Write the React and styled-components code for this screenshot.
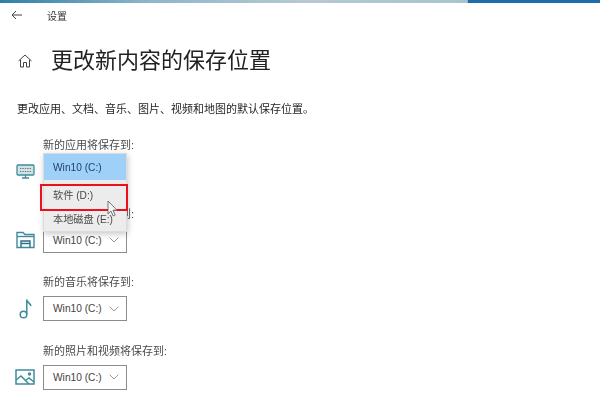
import React from "react";
import styled, { createGlobalStyle } from "styled-components";

const GlobalStyle = createGlobalStyle`
  html, body {
    margin: 0;
    padding: 0;
    background: #ffffff;
  }
  body {
    width: 600px;
    height: 400px;
    overflow: hidden;
    font-family: "Liberation Sans", "Noto Sans CJK SC", sans-serif;
    color: #1f1f1f;
  }
`;

const Page = styled.div`
  width: 600px;
  height: 400px;
  overflow: hidden;
  display: flex;
  flex-direction: column;
  filter: blur(0.4px);
`;

const TopStrip = styled.div`
  height: 3px;
  flex: none;
  background: linear-gradient(
    90deg,
    #2f7fa8 0,
    #8fb6c9 25%,
    #b5c9d2 50%,
    #a9c4d0 77.9%,
    #1b6ea6 78%,
    #1b6ea6 100%
  );
`;

const Header = styled.div`
  height: 24px;
  flex: none;
  display: flex;
  align-items: center;
  padding-left: 11px;
  gap: 24px;
  font-size: 10px;
  color: #333;
`;

const TitleRow = styled.div`
  display: flex;
  align-items: center;
  margin-top: 18px;
  padding-left: 17px;
  gap: 18px;
`;

const Title = styled.h1`
  margin: 0;
  font-size: 22px;
  line-height: 32px;
  font-weight: 400;
  color: #222;
`;

const Description = styled.p`
  margin: 25px 0 0 17px;
  font-size: 11px;
  line-height: 14px;
  color: #262626;
`;

const Sections = styled.div`
  position: relative;
  margin-top: 22px;
  display: flex;
  flex-direction: column;
  gap: 16.5px;
`;

const Section = styled.div`
  display: grid;
  grid-template-columns: 43px auto;
  grid-template-rows: 14px 25px;
  row-gap: 7px;
  height: 52px;
  align-items: center;
`;

const Label = styled.div`
  grid-column: 2;
  font-size: 11px;
  line-height: 14px;
  color: #4a4a4a;
`;

const IconCell = styled.div`
  grid-column: 1;
  grid-row: 2;
  display: flex;
  justify-content: center;
  width: 20px;
  margin-left: 15px;
  color: #3f8c9c;
`;

const Select = styled.div`
  grid-column: 2;
  grid-row: 2;
  box-sizing: border-box;
  width: 84px;
  height: 25px;
  border: 1px solid #8c8c8c;
  display: flex;
  align-items: center;
  justify-content: space-between;
  padding: 0 7px 0 9px;
  font-size: 10.2px;
  color: #444;
  background: #fff;
`;

const Menu = styled.div`
  position: absolute;
  left: 43px;
  top: 15px;
  width: 82px;
  background: #ececec;
  border: 1px solid #dcdcdc;
  box-shadow: 1px 2px 6px rgba(0, 0, 0, 0.22);
  z-index: 2;
`;

const MenuItem = styled.div`
  height: ${(p) => (p.$selected ? "26px" : "24.5px")};
  margin-bottom: ${(p) => (p.$selected ? "2px" : "0")};
  display: flex;
  align-items: center;
  padding-left: 9px;
  font-size: 10.2px;
  color: ${(p) => (p.$selected ? "#23436e" : "#4a4a4a")};
  background: ${(p) => (p.$selected ? "#9fd0f7" : "transparent")};
`;

const Highlight = styled.div`
  position: absolute;
  left: 40px;
  top: 46px;
  width: 88px;
  height: 27px;
  box-sizing: border-box;
  border: 2px solid #ee0f1c;
  z-index: 3;
`;

const Cursor = styled.svg`
  position: absolute;
  left: 107px;
  top: 62px;
  z-index: 4;
`;

const BackIcon = () => (
  <svg width="12" height="10" viewBox="0 0 12 10" fill="none" stroke="#444" strokeWidth="1">
    <path d="M11 5H1M5 1L1 5l4 4" />
  </svg>
);

const HomeIcon = () => (
  <svg width="16" height="16" viewBox="0 0 16 16" fill="none" stroke="#444" strokeWidth="1">
    <path d="M1.5 8L8 2l6.5 6M3.5 6.5V14H6.5V9.5H9.5V14H12.5V6.5" />
  </svg>
);

const Chevron = () => (
  <svg width="10" height="6" viewBox="0 0 10 6" fill="none" stroke="#999" strokeWidth="1">
    <path d="M.7.7l4.3 4.3L9.3.7" />
  </svg>
);

const MonitorIcon = () => (
  <svg width="19" height="15" viewBox="0 0 19 15" fill="none" stroke="currentColor" strokeWidth="1.3">
    <rect x="1" y="1" width="17" height="10" rx="1" fill="#cfe3e6" />
    <path d="M6 14h7M9.5 11v3" />
    <path d="M4 4.5h11M4 7.5h11" stroke="#777" strokeDasharray="1.4 1" strokeWidth="1" />
  </svg>
);

const FolderIcon = () => (
  <svg width="19" height="18" viewBox="0 0 19 18" fill="none" stroke="currentColor" strokeWidth="1.4">
    <path d="M1 16.5V1.5H7L9 3.5H18V16.5Z" />
    <path d="M1 5.5H18" />
    <path d="M5 16.5V10H14V16.5M5 12.5H14" stroke="#2f6f8a" />
  </svg>
);

const NoteIcon = () => (
  <svg width="13" height="21" viewBox="0 0 13 21" fill="none" stroke="currentColor" strokeWidth="1.5">
    <circle cx="4.5" cy="16.5" r="3.3" />
    <path d="M7.8 16.5V1.5c0 3 3.5 3.5 4.2 6.5" />
  </svg>
);

const PictureIcon = () => (
  <svg width="20" height="16" viewBox="0 0 20 16" fill="none" stroke="currentColor" strokeWidth="1.5">
    <rect x="1" y="1" width="18" height="14" />
    <path d="M1 11l5-4 8 8M11 11l3-2 5 4" />
    <circle cx="14.5" cy="5" r="1" />
  </svg>
);

const targets = [
  { label: "新的应用将保存到:", icon: <MonitorIcon /> },
  { label: "新的文档将保存到:", icon: <FolderIcon /> },
  { label: "新的音乐将保存到:", icon: <NoteIcon /> },
  { label: "新的照片和视频将保存到:", icon: <PictureIcon /> },
];

export default function App() {
  return (
    <Page>
      <GlobalStyle />
      <TopStrip />
      <Header>
        <BackIcon />
        <span>设置</span>
      </Header>
      <TitleRow>
        <HomeIcon />
        <Title>更改新内容的保存位置</Title>
      </TitleRow>
      <Description>更改应用、文档、音乐、图片、视频和地图的默认保存位置。</Description>
      <Sections>
        {targets.map((t) => (
          <Section key={t.label}>
            <Label>{t.label}</Label>
            <IconCell>{t.icon}</IconCell>
            <Select>
              Win10 (C:)
              <Chevron />
            </Select>
          </Section>
        ))}
        <Menu>
          <MenuItem $selected>Win10 (C:)</MenuItem>
          <MenuItem>软件 (D:)</MenuItem>
          <MenuItem>本地磁盘 (E:)</MenuItem>
        </Menu>
        <Highlight />
        <Cursor width="12" height="17" viewBox="0 0 12 17">
          <path d="M1 1v13l3-3 2.2 5 2-1-2.2-4.8H10Z" fill="#f4f4f4" stroke="#666" strokeWidth="0.9" />
        </Cursor>
      </Sections>
    </Page>
  );
}
